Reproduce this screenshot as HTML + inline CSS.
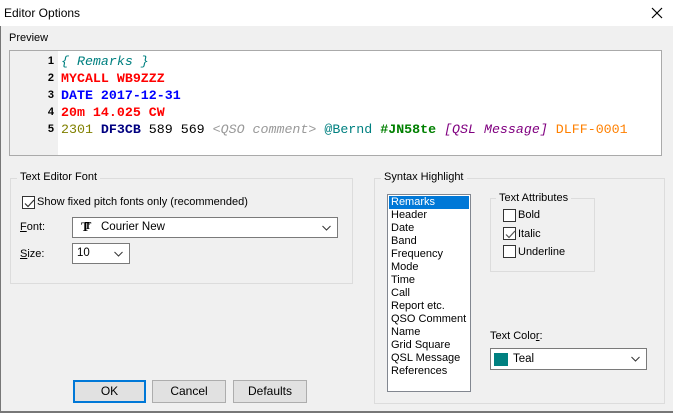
<!DOCTYPE html>
<html><head><meta charset="utf-8"><style>
*{margin:0;padding:0;box-sizing:border-box}
body{width:673px;height:413px;background:#f0f0f0;font-family:"Liberation Sans",sans-serif;font-size:11px;color:#000;position:relative;overflow:hidden}
.a{position:absolute;white-space:nowrap}
.grp{position:absolute;border:1px solid #dcdcdc}
.gt{position:absolute;background:#f0f0f0;padding:0 3px;top:-8px;left:6px}
.cb{position:absolute;width:13px;height:13px;border:1px solid #333;background:#fff}
.cb svg{position:absolute;left:1px;top:1px}
.combo{position:absolute;background:#fff;border:1px solid #7a7a7a}
.arr{position:absolute;right:6px;top:50%;margin-top:-3px}
.mono{font-family:"Liberation Mono",monospace;font-size:13.3px;font-weight:bold;position:absolute;left:61px;white-space:pre}
.ln{position:absolute;left:40px;width:14px;text-align:right;font-size:11px;font-weight:bold}
.btn{position:absolute;background:#e1e1e1;border:1px solid #adadad;text-align:center;line-height:21px;font-size:12px}
.li{position:absolute;left:3px;font-size:11px}
</style></head><body>
<div class="a" style="left:0;top:0;width:673px;height:26px;background:#fff"></div>
<div class="a" style="left:4px;top:6px;font-size:12px">Editor Options</div>
<svg class="a" style="left:651px;top:7px" width="12" height="12"><path d="M1 1L11 11M11 1L1 11" stroke="#000" stroke-width="1.2"/></svg>
<div class="a" style="left:0;top:26px;width:1px;height:387px;background:#777"></div>
<div class="a" style="left:0;top:411px;width:673px;height:2px;background:#777"></div>
<div class="a" style="left:9px;top:32px">Preview</div>
<div class="a" style="left:9px;top:50px;width:653px;height:106px;border:1px solid #aaa;background:#fff"></div>
<div class="a" style="left:10px;top:51px;width:48px;height:104px;background:#f0f0f0"></div>
<div class="ln" style="top:55px">1</div><div class="ln" style="top:72px">2</div><div class="ln" style="top:89px">3</div><div class="ln" style="top:106px">4</div><div class="ln" style="top:123px">5</div>
<div class="mono" style="top:54px;color:#008080;font-weight:normal;font-style:italic">{ Remarks }</div>
<div class="mono" style="top:71px;color:#ff0000">MYCALL WB9ZZZ</div>
<div class="mono" style="top:88px;color:#0000ff">DATE 2017-12-31</div>
<div class="mono" style="top:105px;color:#ff0000">20m 14.025 CW</div>
<div class="mono" style="top:122px"><span style="color:#808000;font-weight:normal">2301</span> <span style="color:#000080">DF3CB</span> <span style="font-weight:normal">589 569</span> <i style="color:#999;font-weight:normal">&lt;QSO comment&gt;</i> <span style="color:#008080;font-weight:normal">@Bernd</span> <span style="color:#008000">#JN58te</span> <i style="color:#800080;font-weight:normal">[QSL Message]</i> <span style="color:#ff8000;font-weight:normal">DLFF-0001</span></div>

<div class="grp" style="left:10px;top:178px;width:343px;height:106px"><div class="gt">Text Editor Font</div></div>
<div class="cb" style="left:22px;top:196px"><svg width="11" height="11"><path d="M1 5.5L4 8.5L10 2" stroke="#333" fill="none" stroke-width="1.2"/></svg></div>
<div class="a" style="left:37px;top:196px;font-size:11px">Show fixed pitch fonts only (recommended)</div>
<div class="a" style="left:20px;top:221px"><u>F</u>ont:</div>
<div class="combo" style="left:72px;top:217px;width:266px;height:21px">
<span class="a" style="left:8px;top:1px;font-family:'Liberation Serif',serif;font-weight:bold;font-size:13px">T<span style="font-size:10px;position:relative;left:-5px;top:-2px">T</span></span>
<span class="a" style="left:28px;top:3px;font-size:11.5px">Courier New</span>
<svg class="arr" width="9" height="6"><path d="M0.5 1L4.5 5L8.5 1" stroke="#333" fill="none"/></svg></div>
<div class="a" style="left:20px;top:248px"><u>S</u>ize:</div>
<div class="combo" style="left:72px;top:243px;width:58px;height:21px">
<span class="a" style="left:4px;top:3px;font-size:11.5px">10</span>
<svg class="arr" width="9" height="6"><path d="M0.5 1L4.5 5L8.5 1" stroke="#333" fill="none"/></svg></div>

<div class="grp" style="left:374px;top:178px;width:291px;height:226px"><div class="gt">Syntax Highlight</div></div>
<div class="a" style="left:387px;top:194px;width:84px;height:198px;border:1px solid #828790;background:#fff">
<div class="a" style="left:1px;top:1px;width:80px;height:13px;background:#0078d7"></div>
<div class="li" style="top:1px;color:#fff">Remarks</div>
<div class="li" style="top:14px">Header</div><div class="li" style="top:27px">Date</div><div class="li" style="top:40px">Band</div><div class="li" style="top:53px">Frequency</div><div class="li" style="top:66px">Mode</div><div class="li" style="top:79px">Time</div><div class="li" style="top:92px">Call</div><div class="li" style="top:105px">Report etc.</div><div class="li" style="top:118px">QSO Comment</div><div class="li" style="top:131px">Name</div><div class="li" style="top:144px">Grid Square</div><div class="li" style="top:157px">QSL Message</div><div class="li" style="top:170px">References</div>
</div>
<div class="grp" style="left:490px;top:198px;width:105px;height:74px"><div class="gt" style="top:-7px;left:5px">Text Attributes</div></div>
<div class="cb" style="left:503px;top:209px"></div><div class="a" style="left:518px;top:209px">Bold</div>
<div class="cb" style="left:503px;top:227px"><svg width="11" height="11"><path d="M1 5.5L4 8.5L10 2" stroke="#555" fill="none" stroke-width="1.2"/></svg></div><div class="a" style="left:518px;top:228px">Italic</div>
<div class="cb" style="left:503px;top:245px"></div><div class="a" style="left:518px;top:246px">Underline</div>
<div class="a" style="left:490px;top:330px">Text Colo<u>r</u>:</div>
<div class="combo" style="left:490px;top:348px;width:157px;height:22px">
<div class="a" style="left:3px;top:4px;width:14px;height:13px;background:#008080"></div>
<span class="a" style="left:22px;top:4px;font-size:11.5px">Teal</span>
<svg class="arr" width="9" height="6"><path d="M0.5 1L4.5 5L8.5 1" stroke="#333" fill="none"/></svg></div>

<div class="btn" style="left:73px;top:380px;width:73px;height:23px;border:2px solid #0078d7;line-height:19px">OK</div>
<div class="btn" style="left:152px;top:380px;width:74px;height:23px">Cancel</div>
<div class="btn" style="left:233px;top:380px;width:74px;height:23px">Defaults</div>
</body></html>
